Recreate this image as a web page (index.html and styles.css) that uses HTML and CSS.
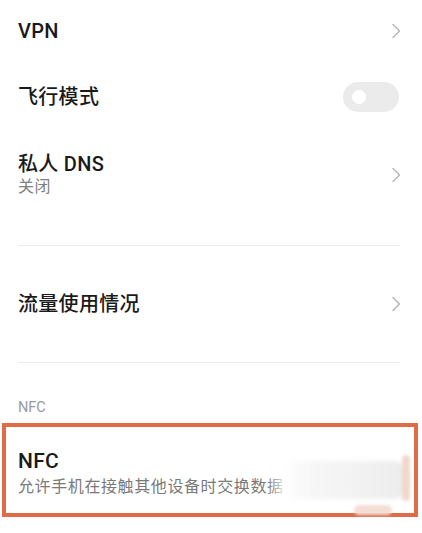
FILE: index.html
```html
<!DOCTYPE html>
<html lang="zh-CN">
<head>
<meta charset="utf-8">
<title>设置</title>
<link rel="stylesheet" href="styles.css">
</head>
<body>
<div class="page">
  <div class="row row-vpn">
    <div class="title">VPN</div>
    <svg class="chev" viewBox="0 0 10 16" width="10" height="16"><path d="M2 1.5 L8.5 8 L2 14.5" fill="none" stroke="#b8b8b8" stroke-width="1.5" stroke-linecap="round" stroke-linejoin="round"/></svg>
  </div>
  <div class="row row-air">
    <div class="title">飞行模式</div>
    <div class="toggle"><span class="knob"></span></div>
  </div>
  <div class="row row-dns">
    <div class="text">
      <div class="title">私人 DNS</div>
      <div class="sub">关闭</div>
    </div>
    <svg class="chev" viewBox="0 0 10 16" width="10" height="16"><path d="M2 1.5 L8.5 8 L2 14.5" fill="none" stroke="#b8b8b8" stroke-width="1.5" stroke-linecap="round" stroke-linejoin="round"/></svg>
  </div>
  <div class="divider div-1"></div>
  <div class="row row-data">
    <div class="title">流量使用情况</div>
    <svg class="chev" viewBox="0 0 10 16" width="10" height="16"><path d="M2 1.5 L8.5 8 L2 14.5" fill="none" stroke="#b8b8b8" stroke-width="1.5" stroke-linecap="round" stroke-linejoin="round"/></svg>
  </div>
  <div class="divider"></div>
  <div class="section">NFC</div>
  <div class="nfc-box">
    <div class="text">
      <div class="title">NFC</div>
      <div class="sub nfc-sub">允许手机在接触其他设备时交换数据</div>
    </div>
    <div class="blur-patch"></div>
    <div class="pink-right"></div>
    <div class="pink-bottom"></div>
  </div>
</div>
</body>
</html>
```

FILE: styles.css
```css
html, body {
  margin: 0;
  padding: 0;
  background: #ffffff;
}

body {
  font-family: Roboto, "Noto Sans CJK SC", sans-serif;
  color: #1c1c1c;
  width: 422px;
  height: 533px;
  overflow: hidden;
}

.page {
  display: flex;
  flex-direction: column;
}

.row {
  display: flex;
  align-items: center;
  justify-content: space-between;
  padding: 0 21px 0 18px;
}

.row-vpn { height: 62px; }
.row-air { height: 70px; }
.row-dns { height: 86px; }
.row-data { height: 116px; }

.title {
  font-size: 20px;
  line-height: 24px;
  font-weight: 500;
  color: #1a1a1a;
  letter-spacing: 0.3px;
}

.sub {
  font-size: 16px;
  line-height: 22px;
  color: #808080;
  letter-spacing: 0.6px;
}

.text {
  display: flex;
  flex-direction: column;
}

.chev {
  display: block;
}

.toggle {
  width: 56px;
  height: 30px;
  border-radius: 15px;
  background: #ebebeb;
  margin-right: 2px;
  display: flex;
  align-items: center;
  padding-left: 9px;
  box-sizing: border-box;
}

.knob {
  width: 14px;
  height: 14px;
  border-radius: 50%;
  background: #ffffff;
}

.divider {
  height: 1px;
  background: #ececec;
  margin: 0 22px 0 18px;
}

.div-1 {
  margin-top: 27px;
}

.section {
  font-size: 14.5px;
  line-height: 20px;
  color: #9a9a9a;
  padding-left: 18px;
  margin-top: 35px;
}

.nfc-box {
  position: relative;
  margin: 5px 4px 0 2px;
  height: 94px;
  box-sizing: border-box;
  border: 4px solid #df6c47;
  padding: 22px 12px 0 12px;
}

.nfc-box .title {
  font-size: 21px;
}

.nfc-sub {
  margin-top: 3px;
  color: #7a7a7a;
}

.blur-patch {
  position: absolute;
  left: 262px;
  top: 34px;
  width: 140px;
  height: 38px;
  background: linear-gradient(90deg, rgba(255,255,255,0) 0%, rgba(255,255,255,0.85) 12%, #f7f7f7 30%, #f1f1f1 70%, #ececec 100%);
  border-radius: 4px 14px 14px 4px;
  filter: blur(2px);
}

.pink-right {
  position: absolute;
  left: 396px;
  top: 28px;
  width: 8px;
  height: 46px;
  background: #f1d8cf;
  border-radius: 4px;
  filter: blur(1.5px);
}

.pink-bottom {
  position: absolute;
  left: 348px;
  top: 78px;
  width: 38px;
  height: 10px;
  background: #f3ddd5;
  border-radius: 5px;
  filter: blur(1.5px);
}
```
